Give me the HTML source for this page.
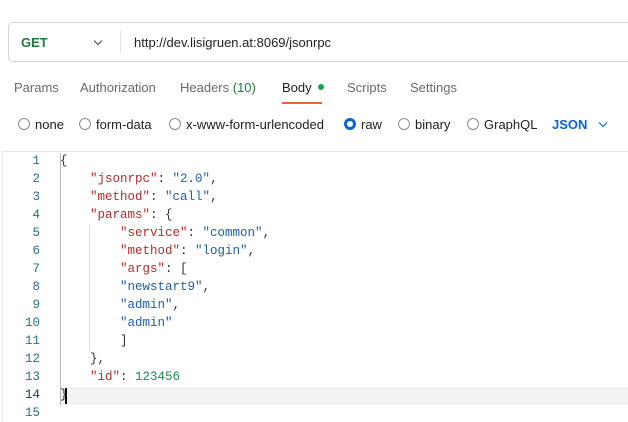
<!DOCTYPE html>
<html><head><style>
body{margin:0;width:628px;height:422px;background:#fff;font-family:"Liberation Sans",sans-serif;position:relative;overflow:hidden;color:#212121}
.abs{position:absolute;white-space:nowrap}
.url{left:8px;top:22px;width:640px;height:40px;border:1px solid #d6d6d6;border-radius:5px;box-sizing:border-box}
.tab{top:80px;font-size:13px;color:#6b6b6b}
.r{top:117px;font-size:13px;color:#212121}
.rad{position:absolute;width:12px;height:12px;border:1px solid #8a8a8a;border-radius:50%;box-sizing:border-box}
.code{font-family:"Liberation Mono",monospace;font-size:12.5px;line-height:18px;white-space:pre}
.ln{left:0;width:40px;text-align:right;color:#2b6f8c;font-family:"Liberation Mono",monospace;font-size:12.5px;line-height:18px;white-space:normal}
.k{color:#b32d2d}.s{color:#1f5fa8}.n{color:#1d8a5a}.p{color:#333}
</style></head><body>
<div class="abs url"></div>
<div class="abs" style="left:21px;top:35px;font-size:13px;font-weight:bold;color:#1f7a3c">GET</div>
<svg class="abs" style="left:93px;top:39px" width="10" height="7"><path d="M1 1.5L5 5.5L9 1.5" stroke="#555" fill="none" stroke-width="1.2"/></svg>
<div class="abs" style="left:120px;top:31px;width:1px;height:22px;background:#e0e0e0"></div>
<div class="abs" style="left:134px;top:35px;font-size:13px;color:#212121">http://dev.lisigruen.at:8069/jsonrpc</div>

<div class="abs tab" style="left:14px">Params</div>
<div class="abs tab" style="left:80px">Authorization</div>
<div class="abs tab" style="left:180px">Headers <span style="color:#1f7a3c">(10)</span></div>
<div class="abs tab" style="left:282px;color:#212121">Body <span style="display:inline-block;width:6px;height:6px;border-radius:50%;background:#1aa34a;vertical-align:2px;margin-left:3px"></span></div>
<div class="abs" style="left:282px;top:102px;width:40px;height:2px;background:#e8643c"></div>
<div class="abs tab" style="left:347px">Scripts</div>
<div class="abs tab" style="left:410px">Settings</div>

<div class="rad" style="left:18px;top:118px"></div><div class="abs r" style="left:35px">none</div>
<div class="rad" style="left:79px;top:118px"></div><div class="abs r" style="left:96px">form-data</div>
<div class="rad" style="left:169px;top:118px"></div><div class="abs r" style="left:186px">x-www-form-urlencoded</div>
<div class="rad" style="left:344px;top:118px;border:3.5px solid #0b63d6"></div><div class="abs r" style="left:361px">raw</div>
<div class="rad" style="left:398px;top:118px"></div><div class="abs r" style="left:415px">binary</div>
<div class="rad" style="left:467px;top:118px"></div><div class="abs r" style="left:484px">GraphQL</div>
<div class="abs r" style="left:552px;color:#0b63d6;font-weight:bold">JSON</div>
<svg class="abs" style="left:598px;top:121px" width="10" height="7"><path d="M1 1.5L5 5.5L9 1.5" stroke="#0b63d6" fill="none" stroke-width="1.2"/></svg>

<div class="abs" style="left:2px;top:151px;width:626px;height:1px;background:#e6e6e6"></div>
<div class="abs" style="left:2px;top:151px;width:1px;height:271px;background:#e6e6e6"></div>
<div class="abs" style="left:60px;top:387px;width:568px;height:18px;background:#f2f2f2"></div>
<div class="abs" style="left:60px;top:153px;width:1px;height:252px;background:#bbb"></div>
<div class="abs" style="left:89px;top:225px;width:1px;height:126px;background:#ddd"></div>
<div class="abs" style="left:65px;top:388px;width:2px;height:16px;background:#000"></div>

<div class="abs ln" style="top:152px">1<br>2<br>3<br>4<br>5<br>6<br>7<br>8<br>9<br>10<br>11<br>12<br>13<br><span style="color:#1a2f6b">14</span><br>15</div>
<div class="abs code" style="left:60px;top:152px"><span class="p">{</span>
    <span class="k">"jsonrpc"</span><span class="p">: </span><span class="s">"2.0"</span><span class="p">,</span>
    <span class="k">"method"</span><span class="p">: </span><span class="s">"call"</span><span class="p">,</span>
    <span class="k">"params"</span><span class="p">: {</span>
        <span class="k">"service"</span><span class="p">: </span><span class="s">"common"</span><span class="p">,</span>
        <span class="k">"method"</span><span class="p">: </span><span class="s">"login"</span><span class="p">,</span>
        <span class="k">"args"</span><span class="p">: [</span>
        <span class="s">"newstart9"</span><span class="p">,</span>
        <span class="s">"admin"</span><span class="p">,</span>
        <span class="s">"admin"</span>
        <span class="p">]</span>
    <span class="p">},</span>
    <span class="k">"id"</span><span class="p">: </span><span class="n">123456</span>
<span class="p">}</span></div>
</body></html>
